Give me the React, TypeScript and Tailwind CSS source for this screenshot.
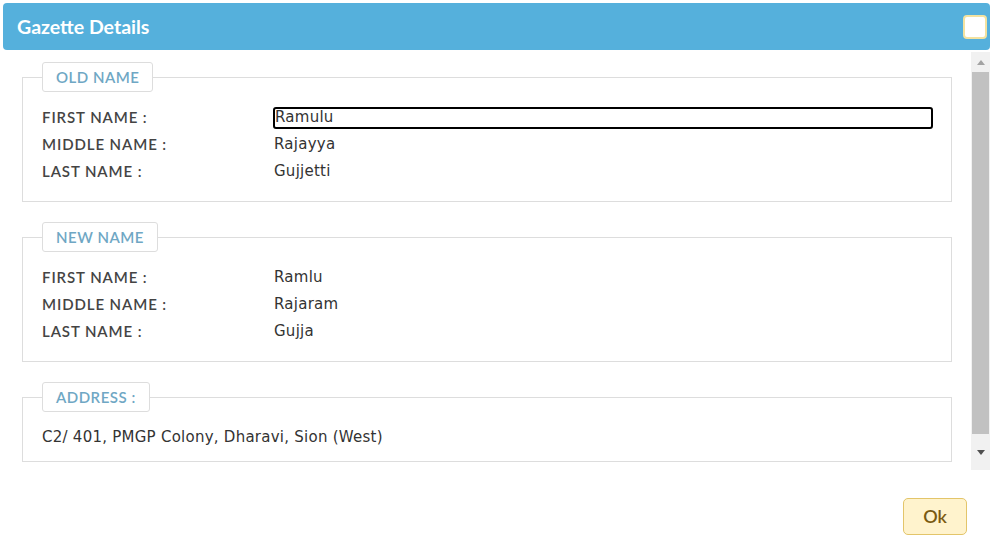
import React from "react";

const label = "font-['Lato',sans-serif] text-[15px] font-semibold text-[#444] tracking-[0.9px]";
const value = "font-['DejaVu_Sans',Verdana,sans-serif] text-[15px] text-[#333] tracking-[0.25px]";

type Row = { name: string; val: string; focused?: boolean };

function Fields({ title, rows }: { title: string; rows: Row[] }) {
  return (
    <fieldset className="border border-[#dddddd] pl-[19px] pr-[18px] pt-[12px] pb-[16px] mb-[20px]">
      <legend className="border border-[#dddddd] rounded-[3px] px-[13px] h-[30px] flex items-center font-['Lato',sans-serif] text-[15px] font-semibold text-[#6fa7c4] tracking-[0.5px]">
        {title}
      </legend>
      {rows.map((r) => (
        <div key={r.name} className="flex items-center h-[27px]">
          <div className={`${label} w-[232px] shrink-0`}>{r.name}</div>
          {r.focused ? (
            <div className={`${value} flex-1 h-[22px] border-2 border-black rounded-[3px] flex items-center -ml-[1px]`}>
              {r.val}
            </div>
          ) : (
            <div className={value}>{r.val}</div>
          )}
        </div>
      ))}
    </fieldset>
  );
}

export default function App() {
  return (
    <div className="w-[991px] h-[557px] bg-white flex flex-col overflow-hidden">
      {/* header */}
      <div className="ml-[3px] mr-[1px] mt-[3px] h-[47px] rounded-[4px] bg-[#55b0dc] flex items-center justify-between pl-[14px] pr-[3px] shrink-0">
        <div className="font-['Lato',sans-serif] font-bold text-[19.5px] text-white">Gazette Details</div>
        <div className="w-[24px] h-[24px] rounded-[4px] bg-white border-2 border-[#f3e2a0]" />
      </div>

      {/* scroll area */}
      <div className="flex h-[418px] mt-[2px] shrink-0">
        <div className="flex-1 overflow-hidden pl-[22px] pr-[19px] pt-[10px]">
          <Fields
            title="OLD NAME"
            rows={[
              { name: "FIRST NAME :", val: "Ramulu", focused: true },
              { name: "MIDDLE NAME :", val: "Rajayya" },
              { name: "LAST NAME :", val: "Gujjetti" },
            ]}
          />
          <Fields
            title="NEW NAME"
            rows={[
              { name: "FIRST NAME :", val: "Ramlu" },
              { name: "MIDDLE NAME :", val: "Rajaram" },
              { name: "LAST NAME :", val: "Gujja" },
            ]}
          />
          <fieldset className="border border-[#dddddd] pl-[19px] pr-[18px] pt-[12px] pb-[10px]">
            <legend className="border border-[#dddddd] rounded-[3px] px-[13px] h-[30px] flex items-center font-['Lato',sans-serif] text-[15px] font-semibold text-[#6fa7c4] tracking-[0.5px]">
              ADDRESS :
            </legend>
            <div className={`${value} h-[27px] flex items-center`}>C2/ 401, PMGP Colony, Dharavi, Sion (West)</div>
          </fieldset>
        </div>
        {/* scrollbar */}
        <div className="w-[19px] mr-[1px] bg-[#f1f1f1] flex flex-col items-center">
          <div className="h-[20px] flex items-center justify-center">
            <svg width="8" height="5" viewBox="0 0 8 5"><path d="M0 5 L4 0 L8 5 Z" fill="#a3a3a3" /></svg>
          </div>
          <div className="w-[17px] h-[362px] bg-[#c1c1c1]" />
          <div className="flex-1 flex items-center justify-center">
            <svg width="8" height="5" viewBox="0 0 8 5"><path d="M0 0 L8 0 L4 5 Z" fill="#505050" /></svg>
          </div>
        </div>
      </div>

      {/* footer */}
      <div className="flex justify-end pr-[24px] pt-[28px]">
        <button className="w-[64px] h-[37px] rounded-[5px] bg-[#fff3cd] border border-[#e3c56a] font-['Lato',sans-serif] font-semibold text-[18px] text-[#7a5a12]">
          Ok
        </button>
      </div>
    </div>
  );
}
